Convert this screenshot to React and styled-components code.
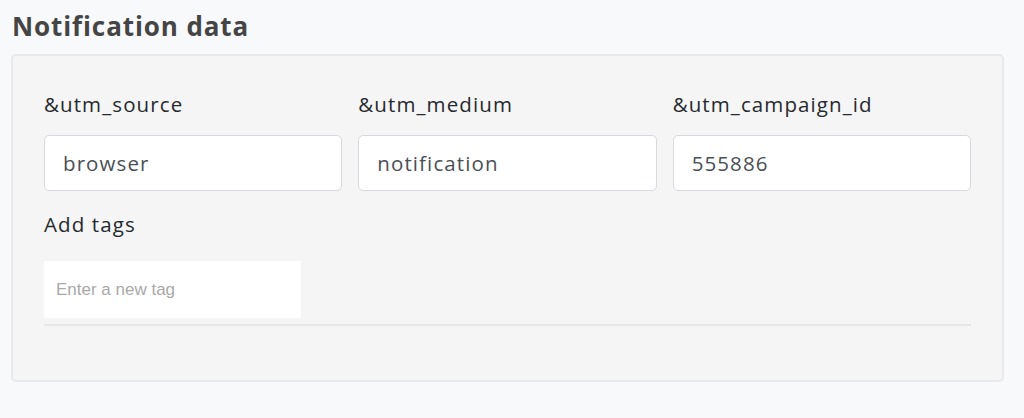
import React from 'react';
import styled, { createGlobalStyle } from 'styled-components';

const GlobalStyle = createGlobalStyle`
  body {
    margin: 0;
    background: #f8f9fb;
    font-family: "Open Sans", "Noto Sans", sans-serif;
    color: #2f3438;
  }
`;

const Page = styled.div`
  padding: 0 20px 0 11px;
`;

const Title = styled.h2`
  margin: 0;
  padding: 10px 0 0 1px;
  height: 42px;
  box-sizing: border-box;
  font-size: 26px;
  line-height: 32px;
  font-weight: 700;
  letter-spacing: 0.9px;
  color: #454545;
`;

const Panel = styled.div`
  width: 993px;
  box-sizing: border-box;
  margin-top: 12px;
  padding: 31px 31px 54px;
  background: #f5f5f5;
  border: 2px solid #e8e9ec;
  border-radius: 5px;
`;

const FieldGrid = styled.div`
  display: grid;
  grid-template-columns: repeat(3, minmax(0, 1fr));
  column-gap: 16px;
`;

const Field = styled.div`
  display: flex;
  flex-direction: column;
  min-width: 0;
`;

const Label = styled.label`
  margin: ${(p) => p.$top || 5}px 0 ${(p) => p.$bottom || 19}px;
  font-size: 20.5px;
  line-height: 24px;
  letter-spacing: 1.1px;
  color: #262a2e;
`;

const TextInput = styled.input`
  width: 100%;
  min-width: 0;
  height: 56px;
  box-sizing: border-box;
  padding: 0 18px;
  border: 1px solid #d6dadf;
  border-radius: 5px;
  background: #fff;
  font-family: inherit;
  font-size: 20.5px;
  letter-spacing: 1.1px;
  color: #4a4f55;
  outline: none;
`;

const TagArea = styled.div`
  border-bottom: 2px solid #e6e6e6;
  padding-bottom: 6px;
`;

const TagInput = styled.input`
  display: block;
  width: 257px;
  height: 57px;
  box-sizing: border-box;
  padding: 0 12px;
  border: none;
  background: #fff;
  font-family: "Liberation Sans", Arial, sans-serif;
  font-size: 17px;
  color: #333;
  outline: none;
  &::placeholder {
    color: #a9a9a9;
  }
`;

const fields = [
  { label: '&utm_source', value: 'browser' },
  { label: '&utm_medium', value: 'notification' },
  { label: '&utm_campaign_id', value: '555886' },
];

export default function App() {
  return (
    <Page>
      <GlobalStyle />
      <Title>Notification data</Title>
      <Panel>
        <FieldGrid>
          {fields.map((f) => (
            <Field key={f.label}>
              <Label>{f.label}</Label>
              <TextInput defaultValue={f.value} />
            </Field>
          ))}
        </FieldGrid>
        <Field>
          <Label $top={21} $bottom={25}>Add tags</Label>
          <TagArea>
            <TagInput placeholder="Enter a new tag" />
          </TagArea>
        </Field>
      </Panel>
    </Page>
  );
}
